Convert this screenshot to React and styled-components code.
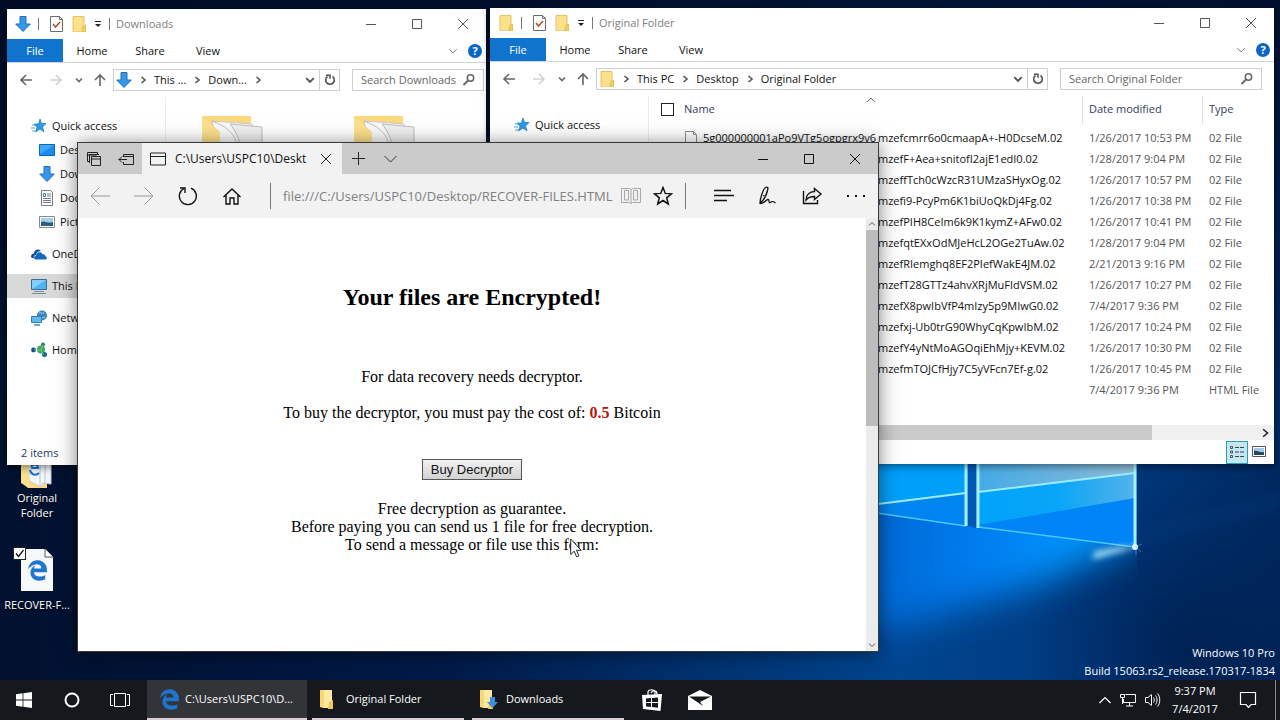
import React from "react";
import styled, { createGlobalStyle } from "styled-components";
import { FaEdgeLegacy } from "react-icons/fa6";

const sidebarItems = [
    { id: 1, title: "Quick access", icon: "star" },
    { id: 2, title: "Desktop", icon: "desktop", nested: true },
    { id: 3, title: "Downloads", icon: "download", nested: true },
    { id: 4, title: "Documents", icon: "document", nested: true },
    { id: 5, title: "Pictures", icon: "picture", nested: true },
    { id: 6, title: "OneDrive", icon: "cloud", spaced: true },
    { id: 7, title: "This PC", icon: "pc", spaced: true },
    { id: 8, title: "Network", icon: "network", spaced: true },
    { id: 9, title: "Homegroup", icon: "home", spaced: true },
];

const prefix = "5g000000001aPo9VTg5ogpgrx9v6";

const files = [
    { name: "mzefcmrr6o0cmaapA+-H0DcseM.02", date: "1/26/2017 10:53 PM" },
    { name: "mzefF+Aea+snitofI2ajE1edI0.02", date: "1/28/2017 9:04 PM" },
    { name: "mzeffTch0cWzcR31UMzaSHyxOg.02", date: "1/26/2017 10:57 PM" },
    { name: "mzefi9-PcyPm6K1biUoQkDj4Fg.02", date: "1/26/2017 10:38 PM" },
    { name: "mzefPIH8CeIm6k9K1kymZ+AFw0.02", date: "1/26/2017 10:41 PM" },
    { name: "mzefqtEXxOdMJeHcL2OGe2TuAw.02", date: "1/28/2017 9:04 PM" },
    { name: "mzefRIemghq8EF2PIefWakE4JM.02", date: "2/21/2013 9:16 PM" },
    { name: "mzefT28GTTz4ahvXRjMuFIdVSM.02", date: "1/26/2017 10:27 PM" },
    { name: "mzefX8pwIbVfP4mIzy5p9MIwG0.02", date: "7/4/2017 9:36 PM" },
    { name: "mzefxj-Ub0trG90WhyCqKpwIbM.02", date: "1/26/2017 10:24 PM" },
    { name: "mzefY4yNtMoAGOqiEhMjy+KEVM.02", date: "1/26/2017 10:30 PM" },
    { name: "mzefmTOJCfHjy7C5yVFcn7Ef-g.02", date: "1/26/2017 10:45 PM" },
];

/* ---------- icons ---------- */

const Svg = ({ w = 16, h = w, box, children, ...rest }) => (
    <svg
        width={w}
        height={h}
        viewBox={box || `0 0 ${w} ${h}`}
        fill="none"
        aria-hidden="true"
        {...rest}
    >
        {children}
    </svg>
);

const FolderIcon = () => (
    <Svg>
        <path d="M2 .5h11V16H2z" fill="#fbe18a" stroke="#e6c562" />
        <path d="M12 10l2.500-1v7H11z" fill="#f4cf63" stroke="#dcb84e" strokeWidth=".8" />
    </Svg>
);

const DownloadIcon = () => (
    <Svg>
        <path d="M5 .5h6V8h4.300L8 15.500.7 8H5z" fill="#3697e6" stroke="#1d6fbd" />
    </Svg>
);

const CheckDocIcon = () => (
    <Svg>
        <path d="M2.500.5h9l3 3v12h-12z" fill="#fff" stroke="#6b6b6b" />
        <path d="M11.500.5v3h3" stroke="#6b6b6b" />
        <path d="M5 8l2.500 3L12 6" stroke="#b5532c" strokeWidth="1.600" />
    </Svg>
);

const FileIcon = () => (
    <Svg>
        <path d="M2.500 1.500h8l3 3v11h-11z" fill="#fff" stroke="#8c8c8c" />
        <path d="M10.500 1.500v3h3" stroke="#8c8c8c" />
    </Svg>
);

const TaskFolderIcon = ({ download }) => (
    <Svg w={20} h={20}>
        <path d="M2 1h8v18H5l-3-1z" fill="#f9d872" />
        <path d="M6 1h8v18H6z" fill="#ffe9a2" />
        <path d="M11 13l4-2v9h-5z" fill="#efc75a" />
        {download && <path d="M12 8h5v5h3l-5.500 6L9 13h3z" fill="#3b8fdd" />}
    </Svg>
);

const Chevron = ({ dir = "right", color = "#555", size = 8, weight = 1.6 }) => {
    const paths = {
        right: "M2.500 1l3.500 3-3.500 3",
        down: "M1 2.500l3 3 3-3",
        up: "M1 5.500l3-3 3 3",
    };
    return (
        <Svg w={size} box="0 0 8 8">
            <path
                d={paths[dir]}
                stroke={color}
                strokeWidth={weight}
                vectorEffect="non-scaling-stroke"
            />
        </Svg>
    );
};

const ArrowIcon = ({ dir = "left", color = "#666" }) => {
    const paths = {
        left: "M13 7H2M7 2L2 7l5 5",
        right: "M1 7h11M7 2l5 5-5 5",
        up: "M7 13V2M2 7l5-5 5 5",
    };
    return (
        <Svg w={14}>
            <path d={paths[dir]} stroke={color} strokeWidth="1.600" />
        </Svg>
    );
};

const RefreshIcon = () => (
    <Svg w={14}>
        <path d="M9.500 3.500A4.300 4.300 0 1 1 4.500 3.500" stroke="#555" strokeWidth="1.600" />
        <path d="M3 2.300h4v3.500" stroke="#555" strokeWidth="1.600" />
    </Svg>
);

const SearchIcon = () => (
    <Svg w={14}>
        <circle cx="8.500" cy="5" r="3.200" stroke="#666" strokeWidth="1.500" />
        <path d="M6 7.500l-4.500 4.500" stroke="#666" strokeWidth="1.800" />
    </Svg>
);

const MinIcon = ({ color }) => (
    <Svg w={10}>
        <path d="M0 5.500h10" stroke={color} />
    </Svg>
);
const MaxIcon = ({ color }) => (
    <Svg w={10}>
        <path d="M.5.500h9v9h-9z" stroke={color} />
    </Svg>
);
const CloseIcon = ({ color }) => (
    <Svg w={10}>
        <path d="M0 0l10 10M10 0L0 10" stroke={color} />
    </Svg>
);

const SideIcon = ({ name }) => {
    switch (name) {
        case "star":
            return (
                <Svg>
                    <path d="M9 1l1.500 4.500H15L11.500 9l1.500 5-4-3-4.500 3L6 9.500 3 6h4.500z" fill="#2f9be3" stroke="#1774b8" strokeWidth=".7" />
                    <path d="M1 7h4M0 10h4M1 13h3" stroke="#4aa8e6" />
                </Svg>
            );
        case "desktop":
            return (
                <Svg>
                    <path d="M.5 2.500h15v11H.5z" fill="#1b8df0" stroke="#0a66b8" />
                    <path d="M1 3h14L1 12z" fill="#41a7fa" />
                </Svg>
            );
        case "download":
            return <DownloadIcon />;
        case "document":
            return (
                <Svg>
                    <path d="M2.500.5h9l2 2v13h-11z" fill="#fff" stroke="#7a7a7a" />
                    <path d="M8 4h4M8 6h4M4 8.500h8M4 10.500h8M4 12.500h8" stroke="#6a7a8a" />
                    <path d="M4.500 3.500h2v3h-2z" stroke="#2d7fb8" />
                </Svg>
            );
        case "picture":
            return (
                <Svg>
                    <path d="M.5 2.500h15v11H.5z" fill="#fff" stroke="#8a8a8a" />
                    <path d="M2 4h12v8H2z" fill="#9ed0ee" />
                    <path d="M2 8c3-2 7 2 12 0v4H2z" fill="#2d5f78" />
                </Svg>
            );
        case "cloud":
            return (
                <Svg>
                    <path d="M0 11c0-3 2-3.500 3-3.500C3 3.500 8 2 10 5c-4 0-5 3-5 4-2 0-2.500 2-2 3H1z" fill="#0d4f9e" />
                    <path d="M5 13.500c-2.500 0-2.500-3.500 0-3.700 0-4 5.500-4.500 6.500-1.500C14 8 14.500 10 14.300 10.300c2 .2 2 3.200 0 3.200z" fill="#1467bd" />
                </Svg>
            );
        case "pc":
            return (
                <Svg>
                    <path d="M.5 1.500h15v10H.5z" fill="#4fb4f2" stroke="#3a6f94" />
                    <path d="M1 2h14L1 11z" fill="#84cdf8" />
                    <path d="M3 13.500h10M1 15.500h14" stroke="#7b8c99" />
                </Svg>
            );
        case "network":
            return (
                <Svg>
                    <circle cx="11" cy="5.500" r="5" fill="#3f86b8" />
                    <path d="M8 3c2-1 3 1 5 0M7 7c3-1 4 2 7 0" stroke="#a8d4ee" />
                    <path d="M.5 6.500h10v6H.5z" fill="#5bbcf3" stroke="#3a7aa5" />
                    <path d="M3 15h6" stroke="#4a86ac" strokeWidth="1.500" />
                </Svg>
            );
        default:
            return (
                <Svg>
                    <circle cx="2.500" cy="8" r="2.400" fill="#11508c" />
                    <circle cx="10" cy="7.500" r="4" fill="#3fa85a" />
                    <circle cx="12" cy="2.500" r="2" fill="#2d7d6c" />
                    <circle cx="13.500" cy="12.500" r="2.500" fill="#14639d" />
                    <path d="M3 8l7 0 3 5M10 8l2-5" stroke="#7fd08f" strokeWidth=".8" />
                </Svg>
            );
    }
};

const BigFolderIcon = () => (
    <Svg w={62} h={60}>
        <path d="M0 0h49v60H0z" fill="#fbd97c" />
        <path d="M10 5l40 3v52H22z" fill="#f9f9f9" stroke="#c9c9c9" />
        <path d="M28 8l32 3v49H42c0-22-4-40-14-52z" fill="#efefef" stroke="#bdbdbd" />
        <path d="M10 5c13 5 20 10 24 20l4 35" stroke="#bdbdbd" />
        <path d="M0 0l18 16v44H0z" fill="#fde08d" />
    </Svg>
);

/* ---------- wallpaper ---------- */

const Wallpaper = () => (
    <WallpaperStyled viewBox="0 0 1280 720" preserveAspectRatio="xMidYMid slice" aria-hidden="true">
        <defs>
            <linearGradient id="base" x1="0" x2="1280" y1="0" y2="0" gradientUnits="userSpaceOnUse">
                <stop offset="0" stopColor="#01112f" />
                <stop offset=".35" stopColor="#001a48" />
                <stop offset=".7" stopColor="#00458f" />
                <stop offset=".86" stopColor="#003a80" />
                <stop offset="1" stopColor="#00285f" />
            </linearGradient>
            <linearGradient id="top" x1="0" x2="0" y1="0" y2="400" gradientUnits="userSpaceOnUse">
                <stop offset="0" stopColor="#000c26" stopOpacity=".85" />
                <stop offset="1" stopColor="#000c26" stopOpacity="0" />
            </linearGradient>
            <radialGradient id="shade" cx="1190" cy="650" r="170" gradientUnits="userSpaceOnUse">
                <stop offset="0" stopColor="#001c4a" stopOpacity=".75" />
                <stop offset="1" stopColor="#001c4a" stopOpacity="0" />
            </radialGradient>
            <radialGradient id="beam" cx="1080" cy="550" r="330" gradientUnits="userSpaceOnUse">
                <stop offset="0" stopColor="#0098ff" />
                <stop offset=".3" stopColor="#007df0" />
                <stop offset=".65" stopColor="#0067d2" />
                <stop offset="1" stopColor="#004a9c" stopOpacity="0" />
            </radialGradient>
            <linearGradient id="pane" x1="978" x2="1135" y1="0" y2="0" gradientUnits="userSpaceOnUse">
                <stop offset="0" stopColor="#45abe6" />
                <stop offset="1" stopColor="#8dbcd8" />
            </linearGradient>
            <linearGradient id="paneMid" x1="978" x2="1135" y1="0" y2="0" gradientUnits="userSpaceOnUse">
                <stop offset="0" stopColor="#00a4fb" />
                <stop offset=".5" stopColor="#08a5f8" />
                <stop offset="1" stopColor="#55b2ea" />
            </linearGradient>
            <filter id="soft" x="-30%" y="-30%" width="160%" height="160%">
                <feGaussianBlur stdDeviation="18" />
            </filter>
            <filter id="glow" x="-50%" y="-50%" width="200%" height="200%">
                <feGaussianBlur stdDeviation="3" />
            </filter>
            <clipPath id="leftOfEdge">
                <path d="M0 0h1137v720H0z" />
            </clipPath>
        </defs>
        <path d="M0 0h1280v720H0z" fill="url(#base)" />
        <path d="M0 0h1280v720H0z" fill="url(#top)" />
        <path d="M0 0h1280v720H0z" fill="url(#shade)" />
        <g clipPath="url(#leftOfEdge)">
            <path d="M1137 400v140L1040 584 900 628 760 650V400z" fill="url(#beam)" filter="url(#soft)" />
        </g>
        <path d="M1137 548l143-38v-20l-143 40z" fill="#0a4a92" opacity=".12" filter="url(#glow)" />
        <path d="M870 440h96v86l-96-15z" fill="#0085f0" />
        <path d="M870 440h96v53l-96 12z" fill="#00a0fa" />
        <path d="M968 440h8v88l-8-2z" fill="#0058b4" />
        <path d="M978 440h157v106l-157-19z" fill="#0084f6" />
        <path d="M978 440h157v58l-157 27z" fill="url(#paneMid)" />
        <path d="M978 440h157v33l-157 19z" fill="url(#pane)" />
        <path d="M870 505l96-12M978 492l157-19" stroke="#9cecff" strokeWidth="2" />
        <path d="M870 512l96 14M978 527l157 20" stroke="#4bc8fa" strokeWidth="1.500" />
        <path d="M966 440v86M978 440v88M1135 440v108" stroke="#a5f1ff" strokeWidth="3" />
        <path d="M1137 547l-45 12 3-7 25-5z" fill="#bdf0ff" filter="url(#glow)" />
        <circle cx="1135" cy="547" r="3" fill="#effcff" />
        <path d="M1129 550l13-6M1136 539v16M1131 542l10 10" stroke="#70d6ff" strokeWidth=".6" opacity=".7" />
    </WallpaperStyled>
);

/* ---------- explorer ---------- */

function Explorer({ title, icon, crumbs, places, pad, sortable, status, children, ...place }) {
    return (
        <WindowStyled {...place}>
            <TitleBar>
                <QuickTools>
                    {icon}
                    <Divider />
                    <CheckDocIcon />
                    <FolderIcon />
                    <Svg w={8} h={8}>
                        <path d="M1 1.500h6" stroke="#222" />
                        <path d="M1 4h6L4 7z" fill="#222" />
                    </Svg>
                    <Divider />
                </QuickTools>
                <WindowTitle>{title}</WindowTitle>
                <WindowControls color="#555" />
            </TitleBar>
            <Ribbon>
                <FileTab type="button">File</FileTab>
                <RibbonTab type="button">Home</RibbonTab>
                <RibbonTab type="button">Share</RibbonTab>
                <RibbonTab type="button">View</RibbonTab>
                <RibbonEnd>
                    <IconButton type="button" aria-label="Expand ribbon">
                        <Chevron dir="down" size={10} weight={1} color="#777" />
                    </IconButton>
                    <HelpButton type="button" aria-label="Help">?</HelpButton>
                </RibbonEnd>
            </Ribbon>
            <AddressRow $pad={pad}>
                <NavButtons>
                    <IconButton type="button" aria-label="Back"><ArrowIcon /></IconButton>
                    <IconButton type="button" aria-label="Forward"><ArrowIcon dir="right" color="#d2d2d2" /></IconButton>
                    <IconButton type="button" aria-label="Recent"><Chevron dir="down" color="#666" /></IconButton>
                    <IconButton type="button" aria-label="Up"><ArrowIcon dir="up" /></IconButton>
                </NavButtons>
                <AddressBox>
                    {icon}
                    {crumbs.map((crumb) => (
                        <Crumb key={crumb}>
                            <Chevron />
                            <span>{crumb}</span>
                        </Crumb>
                    ))}
                    {!sortable && <Crumb><Chevron /></Crumb>}
                    <AddressEnd>
                        <IconButton type="button" aria-label="Previous locations">
                            <Chevron dir="down" size={10} weight={2} />
                        </IconButton>
                        <RefreshButton type="button" aria-label="Refresh"><RefreshIcon /></RefreshButton>
                    </AddressEnd>
                </AddressBox>
                <SearchBox $wide={sortable}>
                    <input type="text" aria-label={`Search ${title}`} placeholder={`Search ${title}`} />
                    <SearchIcon />
                </SearchBox>
            </AddressRow>
            <Body>
                <Sidebar>
                    {places.map((item) => (
                        <SideItem
                            key={item.id}
                            $nested={item.nested}
                            $spaced={item.spaced}
                            $active={item.icon === "pc"}
                        >
                            <SideIcon name={item.icon} />
                            <span>{item.title}</span>
                        </SideItem>
                    ))}
                </Sidebar>
                {children}
            </Body>
            <StatusBar>
                <span>{status}</span>
                {sortable && (
                    <ViewButtons>
                        <ViewButton type="button" aria-label="Details" $active>
                            <Svg>
                                <path d="M1.500 2.500h2v2h-2zM1.500 7h2v2h-2zM1.500 11.500h2v2h-2z" stroke="#444" strokeWidth=".9" />
                                <path d="M6 3.500h4M11 3.500h4M6 8h4M11 8h4M6 12.500h4M11 12.500h4" stroke="#444" />
                            </Svg>
                        </ViewButton>
                        <ViewButton type="button" aria-label="Large icons">
                            <Svg w={14} h={12}>
                                <path d="M.5.500h13v10H.5z" fill="#fff" stroke="#555" />
                                <path d="M2 2h10v7H2z" fill="#9ccbe8" />
                                <path d="M2 5c3-1 6 2 10 1v3H2z" fill="#24465c" />
                            </Svg>
                        </ViewButton>
                    </ViewButtons>
                )}
            </StatusBar>
        </WindowStyled>
    );
}

function WindowControls({ color }) {
    return (
        <Controls>
            <ControlButton type="button" aria-label="Minimize"><MinIcon color={color} /></ControlButton>
            <ControlButton type="button" aria-label="Maximize"><MaxIcon color={color} /></ControlButton>
            <ControlButton type="button" aria-label="Close"><CloseIcon color={color} /></ControlButton>
        </Controls>
    );
}

function FileTable() {
    return (
        <FilePane>
            <TableStyled>
                <colgroup>
                    <col />
                    <col className="date" />
                    <col className="type" />
                </colgroup>
                <thead>
                    <tr>
                        <th>
                            <NameHead>
                                <input type="checkbox" id="all" aria-label="Select all" />
                                <label htmlFor="all">Name</label>
                                <SortMark><Chevron dir="up" size={10} weight={1} /></SortMark>
                            </NameHead>
                        </th>
                        <th>Date modified</th>
                        <th>Type</th>
                    </tr>
                </thead>
                <tbody>
                    {files.map((file) => (
                        <tr key={file.name}>
                            <td>
                                <FileName>
                                    <FileIcon />
                                    <Prefix>{prefix}</Prefix>
                                    <span>{file.name}</span>
                                </FileName>
                            </td>
                            <td>{file.date}</td>
                            <td>02 File</td>
                        </tr>
                    ))}
                    <tr>
                        <td>
                            <FileName>
                                <FileIcon />
                                <span>RECOVER-FILES.HTML</span>
                            </FileName>
                        </td>
                        <td>7/4/2017 9:36 PM</td>
                        <td>HTML File</td>
                    </tr>
                </tbody>
            </TableStyled>
            <HScroll>
                <HThumb />
                <Chevron color="#222" size={10} />
            </HScroll>
        </FilePane>
    );
}

/* ---------- browser ---------- */

function Browser() {
    return (
        <BrowserStyled>
            <TabStrip>
                <StripButtons>
                    <Svg w={16}>
                        <path d="M3.500 10.500h-2v-9h10v2M1.500 4h9" stroke="#222" />
                        <path d="M5.500 5.500h9v9h-9zM5.500 8h9M3.500 12V3.500H13" stroke="#222" />
                    </Svg>
                    <Svg w={16}>
                        <path d="M5.500 6V3.500h10v10h-10V11M6 5.500h9M9 8.500H.7M4 5.500l-3 3 3 3" stroke="#222" />
                    </Svg>
                </StripButtons>
                <Tab>
                    <Svg w={16}>
                        <path d="M.5 2h15v12H.5zM.5 5.500h15" stroke="#222" />
                    </Svg>
                    <TabLabel>C:\Users\USPC10\Deskt</TabLabel>
                    <IconButton type="button" aria-label="Close tab"><CloseIcon color="#222" /></IconButton>
                </Tab>
                <StripButton type="button" aria-label="New tab">
                    <Svg w={13}><path d="M6.500 0v13M0 6.500h13" stroke="#222" /></Svg>
                </StripButton>
                <StripButton type="button" aria-label="Tab previews">
                    <Svg w={13}><path d="M.5 4l6 6 6-6" stroke="#333" /></Svg>
                </StripButton>
                <WindowControls color="#111" />
            </TabStrip>
            <Toolbar>
                <ToolButton type="button" aria-label="Back">
                    <Svg w={20}><path d="M20 10H1M9.500 1.500L1 10l8.500 8.500" stroke="#999" /></Svg>
                </ToolButton>
                <ToolButton type="button" aria-label="Forward">
                    <Svg w={20}><path d="M0 10h19M10.500 1.500L19 10l-8.500 8.500" stroke="#999" /></Svg>
                </ToolButton>
                <ToolButton type="button" aria-label="Refresh">
                    <Svg w={20}>
                        <path d="M13 2.200A8.500 8.500 0 1 1 6 2.500" stroke="#111" strokeWidth="1.400" />
                        <path d="M2 2h5v5" stroke="#111" strokeWidth="1.400" />
                    </Svg>
                </ToolButton>
                <ToolButton type="button" aria-label="Home">
                    <Svg w={20}>
                        <path d="M1.500 11L10 3l8.500 8M4 9v9h4v-6h4v6h4V9" stroke="#111" strokeWidth="1.400" />
                    </Svg>
                </ToolButton>
                <UrlField>
                    <input type="text" aria-label="Address" defaultValue="file:///C:/Users/USPC10/Desktop/RECOVER-FILES.HTML" />
                    <Svg w={20}>
                        <path d="M.5 2.500h8l1.500 1 1.500-1h8v14h-8l-1.500 1-1.500-1h-8zM10 3.500v14M3.500 4.500h4v9.500h-4zM12.500 4.500h4v9.500h-4z" stroke="#a8a8a8" />
                    </Svg>
                    <Svg w={20}>
                        <path d="M10 1.500l2.300 5.900 6.200.4-4.800 4 1.600 6.200-5.300-3.500L4.700 18l1.600-6.200-4.800-4 6.200-.4z" stroke="#111" strokeWidth="1.500" />
                    </Svg>
                </UrlField>
                <ToolButton type="button" aria-label="Hub">
                    <Svg w={20}><path d="M0 4.500h17M0 9.500h20M0 14.500h13" stroke="#111" strokeWidth="1.300" /></Svg>
                </ToolButton>
                <ToolButton type="button" aria-label="Make a web note">
                    <Svg w={20}>
                        <path d="M2 17c0-4 3-14 5.500-15.500 2-1 3 0 2 3C8.500 9 6 14 2 17zM5 9.500l3 1M2 17.500c5 0 6-4 8-4s0 4 2.500 3c2-2 3-1 5 .5" stroke="#111" strokeWidth="1.300" />
                    </Svg>
                </ToolButton>
                <ToolButton type="button" aria-label="Share">
                    <Svg w={20}>
                        <path d="M1.500 5v12.500h14V14" stroke="#111" strokeWidth="1.400" />
                        <path d="M12.500 2.500L19 8l-6.500 5.500v-3c-4 0-6 .5-8.500 3.500 0-5 3.500-8.500 8.500-8.500z" stroke="#111" strokeWidth="1.400" />
                    </Svg>
                </ToolButton>
                <ToolButton type="button" aria-label="More">
                    <Svg w={20}>
                        <path d="M1 9h2v2H1zM9 9h2v2H9zM17 9h2v2h-2z" fill="#111" />
                    </Svg>
                </ToolButton>
            </Toolbar>
            <Viewport>
                <Page>
                    <h2>Your files are Encrypted!</h2>
                    <p>For data recovery needs decryptor.</p>
                    <p>
                        To buy the decryptor, you must pay the cost of: <b>0.5</b> Bitcoin
                    </p>
                    <BuyButton type="button">Buy Decryptor</BuyButton>
                    <p>
                        Free decryption as guarantee.
                        <br />
                        Before paying you can send us 1 file for free decryption.
                        <br />
                        To send a message or file use this form:
                    </p>
                </Page>
                <VScroll>
                    <Chevron dir="up" weight={1} />
                    <VThumb />
                    <Chevron dir="down" weight={1} />
                </VScroll>
            </Viewport>
        </BrowserStyled>
    );
}

function Taskbar() {
    return (
        <TaskbarStyled>
            <TaskButton type="button" aria-label="Start">
                <Svg w={16}>
                    <path d="M0 2.200L6.600 1.300v6.300H0zM7.400 1.200L16 0v7.600H7.400zM0 8.400h6.600v6.300L0 13.800zM7.400 8.400H16V16l-8.600-1.200z" fill="#fff" />
                </Svg>
            </TaskButton>
            <TaskButton type="button" aria-label="Cortana">
                <Svg w={16}><circle cx="8" cy="8" r="6.500" stroke="#fff" strokeWidth="2" /></Svg>
            </TaskButton>
            <TaskButton type="button" aria-label="Task view">
                <Svg w={20} h={14}>
                    <path d="M4.500.5h11v13h-11zM3 1.500H.5v11H3M17 1.500h2.500v11H17" stroke="#fff" />
                </Svg>
            </TaskButton>
            <Apps>
                <TaskItem type="button" $active>
                    <FaEdgeLegacy size={21} color="#1f74d0" />
                    C:\Users\USPC10\D...
                </TaskItem>
                <TaskItem type="button"><TaskFolderIcon />Original Folder</TaskItem>
                <TaskItem type="button"><TaskFolderIcon download />Downloads</TaskItem>
            </Apps>
            <TaskButton type="button" aria-label="Store">
                <Svg w={22} h={24}>
                    <path d="M7 8V4c0-3 7-3 7 0v3M10 5c1-3 6-3 6 1v2" stroke="#fff" strokeWidth="1.200" />
                    <path d="M1 7l20-1-1.500 17L2 21z" fill="#fff" />
                    <path d="M5 10.500l5-.5v4H5zM11 10l6-.5V14h-6zM5 15h5v4l-5-.5zM11 15h6v4.700l-6-.6z" fill="#15191e" />
                </Svg>
            </TaskButton>
            <TaskButton type="button" aria-label="Mail">
                <Svg w={24} h={20}>
                    <path d="M0 6l12-6 12 6v14H0z" fill="#fff" />
                    <path d="M1 6.500h22L12 12l3 4z" fill="#15191e" />
                </Svg>
            </TaskButton>
            <Tray>
                <Svg w={12}><path d="M.5 9L6 3.500 11.500 9" stroke="#fff" strokeWidth="1.200" /></Svg>
                <Svg w={16}>
                    <path d="M5.500 2.500h10v8h-12V7M9.500 11v3M6 14h7" stroke="#fff" />
                    <path d="M.5 2.500h4v3h-4zM2.500 6v6" stroke="#fff" />
                </Svg>
                <Svg w={16} h={16}>
                    <path d="M.5 5.500h2.500L6.500 2.500v11L3 10.500H.5z" stroke="#fff" />
                    <path d="M8.500 5.500c1 1.500 1 3.500 0 5M10.500 3.500c2 2.500 2 6.500 0 9M12.500 1.500c3 3.500 3 9.500 0 13" stroke="#fff" />
                </Svg>
                <Clock>
                    <span>9:37 PM</span>
                    <span>7/4/2017</span>
                </Clock>
                <Svg w={18} h={16}>
                    <path d="M1.500.5h15v12H12l-2.500 3-2.500-3H1.500z" stroke="#fff" strokeWidth="1.200" />
                </Svg>
                <ShowDesktop />
            </Tray>
        </TaskbarStyled>
    );
}

function App() {
    return (
        <DesktopStyled>
            <GlobalStyle />
            <Workspace>
                <Wallpaper />
                <DesktopIcons>
                    <DesktopIcon>
                        <Svg w={34} h={42}>
                            <path d="M1 0h26v42H8L1 36z" fill="#fbd97c" />
                            <path d="M9 4h22v34l-8-1-2 4-12-6z" fill="#f3f6fb" stroke="#c2cbd8" />
                            <path d="M20 10v30M25 12v25" stroke="#b8c4d4" />
                            <path d="M10 24c1 5 6 6 9 3M11 22h7c0-4-5-5-7-1" stroke="#1f74d0" strokeWidth="2" />
                            <path d="M1 0l8 8v34l-8-5z" fill="#fde08d" />
                        </Svg>
                        <span>Original Folder</span>
                    </DesktopIcon>
                    <DesktopIcon>
                        <FileSheet>
                            <Svg w={32} h={42}>
                                <path d="M0 0h24l8 8v34H0z" fill="#f7f8fa" />
                                <path d="M24 0v8h8" stroke="#555" fill="#fff" />
                            </Svg>
                            <FaEdgeLegacy size={21} color="#1f74d0" />
                            <input type="checkbox" aria-label="Select RECOVER-FILES" defaultChecked />
                            <Svg w={9} className="tick"><path d="M1 4.500l2.500 3L8.500 1" stroke="#111" strokeWidth="1.300" /></Svg>
                        </FileSheet>
                        <span>RECOVER-F...</span>
                    </DesktopIcon>
                </DesktopIcons>
                <Watermark>
                    <span>Windows 10 Pro</span>
                    <span>Build 15063.rs2_release.170317-1834</span>
                </Watermark>
                <Explorer
                    title="Downloads"
                    icon={<DownloadIcon />}
                    crumbs={["This ...", "Down..."]}
                    places={sidebarItems}
                    pad={2}
                    status="2 items"
                    $left={7}
                    $top={9}
                    $width={479}
                    $height={456}
                >
                    <FolderGrid>
                        <BigFolderIcon />
                        <BigFolderIcon />
                    </FolderGrid>
                </Explorer>
                <Explorer
                    title="Original Folder"
                    icon={<FolderIcon />}
                    crumbs={["This PC", "Desktop", "Original Folder"]}
                    places={sidebarItems.slice(0, 1)}
                    pad={12}
                    sortable
                    status="13 items"
                    $left={490}
                    $top={8}
                    $width={784}
                    $height={456}
                >
                    <FileTable />
                </Explorer>
                <Browser />
                <Cursor viewBox="0 0 12 20" width="12" height="20" aria-hidden="true">
                    <path d="M.7 1v15.500l3.500-3.300 2.400 5.600 2.300-1-2.400-5.500h4.700z" fill="#fff" stroke="#111" strokeWidth=".9" />
                </Cursor>
            </Workspace>
            <Taskbar />
        </DesktopStyled>
    );
}

const GlobalStyle = createGlobalStyle`
    * {
        box-sizing: border-box;
    }
    body {
        margin: 0;
        font-family: "Open Sans", "Noto Sans", sans-serif;
        font-size: 11px;
        line-height: 16px;
        color: #111;
    }
    button, input {
        font: inherit;
        color: inherit;
        border: none;
        background: none;
        padding: 0;
        margin: 0;
        min-width: 0;
    }
    svg {
        flex: none;
        display: block;
    }
`;

const DesktopStyled = styled.main`
    display: flex;
    flex-direction: column;
    height: 100vh;
    overflow: hidden;
    background: #01112f;
`;

const Workspace = styled.div`
    flex: 1;
    position: relative;
    min-height: 0;
`;

const WallpaperStyled = styled.svg`
    position: absolute;
    left: 0;
    top: 0;
    width: 100%;
    height: 100vh;
`;

const DesktopIcons = styled.div`
    position: absolute;
    left: 0;
    top: 446px;
    width: 74px;
    display: flex;
    flex-direction: column;
    gap: 29px;
`;

const DesktopIcon = styled.div`
    display: flex;
    flex-direction: column;
    align-items: center;
    gap: 6px;
    color: #fff;
    text-align: center;
    line-height: 15px;
    text-shadow: 0 1px 2px #000;
    white-space: nowrap;
    span {
        white-space: pre-wrap;
        width: 72px;
        padding: 0 1px;
    }
    &:first-child {
        gap: 2px;
        span {
            padding: 0 14px;
        }
    }
`;

const FileSheet = styled.div`
    position: relative;
    display: grid;
    place-items: center;
    & > svg {
        grid-area: 1 / 1;
    }
    input {
        appearance: none;
        position: absolute;
        left: -8px;
        top: -2px;
        width: 13px;
        height: 13px;
        background: #fff;
        border: 1px solid #222;
    }
    .tick {
        position: absolute;
        left: -6px;
        top: 0;
    }
`;

const Watermark = styled.div`
    position: absolute;
    right: 5px;
    bottom: 0;
    display: flex;
    flex-direction: column;
    text-align: right;
    color: #fff;
    line-height: 18px;
`;

const WindowStyled = styled.section`
    position: absolute;
    left: ${(p) => p.$left}px;
    top: ${(p) => p.$top}px;
    width: ${(p) => p.$width}px;
    height: ${(p) => p.$height}px;
    display: flex;
    flex-direction: column;
    background: #fff;
    box-shadow: 0 2px 8px rgba(0, 0, 0, 0.5);
    overflow: hidden;
`;

const TitleBar = styled.header`
    display: flex;
    align-items: center;
    height: 30px;
    flex: none;
    padding-left: 8px;
`;

const QuickTools = styled.div`
    display: flex;
    align-items: center;
    gap: 7px;
`;

const Divider = styled.i`
    width: 1px;
    height: 12px;
    margin: 0 2px 0 0;
    background: #777;
`;

const WindowTitle = styled.h1`
    flex: 1;
    margin: 0 0 0 4px;
    font-size: 11px;
    font-weight: 400;
    color: #808080;
`;

const Controls = styled.div`
    display: flex;
    align-self: stretch;
    margin-left: auto;
`;

const ControlButton = styled.button`
    width: 46px;
    display: grid;
    place-items: center;
`;

const Ribbon = styled.nav`
    display: flex;
    height: 24px;
    flex: none;
    border-bottom: 1px solid #d4d4d4;
`;

const RibbonTab = styled.button`
    width: 58px;
    text-align: center;
`;

const FileTab = styled(RibbonTab)`
    width: 56px;
    background: #1074cf;
    color: #fff;
`;

const RibbonEnd = styled.div`
    display: flex;
    align-items: center;
    gap: 10px;
    margin-left: auto;
    padding-right: 4px;
`;

const IconButton = styled.button`
    display: grid;
    place-items: center;
`;

const HelpButton = styled.button`
    width: 14px;
    height: 14px;
    border-radius: 50%;
    background: #0b66c3;
    color: #fff;
    font-size: 11px;
    font-weight: 700;
    line-height: 14px;
`;

const AddressRow = styled.div`
    display: flex;
    flex: none;
    gap: 12px;
    padding: 6px ${(p) => p.$pad}px 0 2px;
`;

const NavButtons = styled.div`
    display: grid;
    grid-template-columns: 34px 26px 20px 22px;
    align-items: center;
    margin-right: -10px;
`;

const AddressBox = styled.div`
    flex: 1;
    display: flex;
    align-items: center;
    height: 22px;
    padding-left: 2px;
    border: 1px solid #cfcfcf;
    white-space: nowrap;
`;

const Crumb = styled.span`
    display: flex;
    align-items: center;
    gap: 7px;
    padding-left: 7px;
`;

const AddressEnd = styled.div`
    display: flex;
    align-self: stretch;
    margin-left: auto;
    gap: 4px;
`;

const RefreshButton = styled(IconButton)`
    width: 20px;
    border-left: 1px solid #cfcfcf;
`;

const SearchBox = styled.label`
    display: flex;
    align-items: center;
    width: ${(p) => (p.$wide ? 202 : 132)}px;
    padding: 0 7px 0 8px;
    border: 1px solid #cfcfcf;
    input {
        flex: 1;
        outline: none;
    }
    input::placeholder {
        color: #666;
        opacity: 1;
    }
`;

const Body = styled.div`
    flex: 1;
    display: flex;
    min-height: 0;
    padding-top: 6px;
`;

const Sidebar = styled.ul`
    width: 159px;
    flex: none;
    margin: 0;
    padding: 17px 0 0;
    list-style: none;
    border-right: 1px solid #ececec;
`;

const SideItem = styled.li`
    display: flex;
    align-items: center;
    gap: 5px;
    height: 24px;
    margin-top: ${(p) => (p.$spaced ? 8 : 0)}px;
    padding-left: ${(p) => (p.$nested ? 32 : 24)}px;
    background: ${(p) => (p.$active ? "#d9d9d9" : "transparent")};
`;

const FolderGrid = styled.div`
    display: flex;
    align-items: flex-start;
    gap: 90px;
    padding: 19px 0 0 36px;
`;

const StatusBar = styled.footer`
    display: flex;
    align-items: center;
    justify-content: space-between;
    height: 24px;
    flex: none;
    padding: 0 4px 0 14px;
    color: #24365c;
`;

const ViewButtons = styled.div`
    display: flex;
`;

const ViewButton = styled.button`
    width: 22px;
    height: 23px;
    display: grid;
    place-items: center;
    border: 1px solid ${(p) => (p.$active ? "#2a9fb8" : "transparent")};
    background: ${(p) => (p.$active ? "#c4e8f2" : "transparent")};
`;

const FilePane = styled.div`
    flex: 1;
    display: flex;
    flex-direction: column;
    min-width: 0;
`;

const TableStyled = styled.table`
    width: 100%;
    table-layout: fixed;
    border-collapse: separate;
    border-spacing: 0;
    .date {
        width: 120px;
    }
    .type {
        width: 72px;
    }
    th {
        height: 31px;
        padding: 0 0 0 6px;
        text-align: left;
        font-weight: 400;
        color: #33415c;
        border-left: 1px solid #dedede;
        border-bottom: 5px solid #fff;
    }
    th:first-child {
        border-left: none;
        padding-left: 12px;
    }
    td {
        height: 21px;
        padding: 0 0 0 7px;
        white-space: nowrap;
        color: #555;
    }
    td:first-child {
        padding-left: 34px;
        color: #111;
    }
`;

const NameHead = styled.div`
    display: flex;
    align-items: center;
    gap: 10px;
    position: relative;
    input {
        appearance: none;
        width: 13px;
        height: 13px;
        border: 1px solid #222;
    }
`;

const SortMark = styled.span`
    position: absolute;
    left: 205px;
    top: -6px;
`;

const FileName = styled.div`
    display: flex;
    align-items: center;
    gap: 4px;
`;

const Prefix = styled.span`
    width: 171px;
`;

const HScroll = styled.div`
    display: flex;
    align-items: center;
    justify-content: space-between;
    height: 15px;
    margin-top: auto;
    padding-right: 4px;
    background: #f0f0f0;
`;

const HThumb = styled.div`
    width: 81%;
    height: 100%;
    background: #cbcbcb;
`;

const BrowserStyled = styled.section`
    position: absolute;
    left: 77px;
    top: 142px;
    width: 802px;
    height: 510px;
    display: flex;
    flex-direction: column;
    border: 1px solid #3a3a3a;
    background: #fff;
    box-shadow: 0 2px 18px rgba(0, 0, 0, 0.5);
`;

const TabStrip = styled.header`
    display: flex;
    height: 31px;
    flex: none;
    background: #cbcbcb;
`;

const StripButtons = styled.div`
    display: flex;
    align-items: center;
    gap: 16px;
    width: 64px;
    padding-left: 8px;
`;

const Tab = styled.div`
    display: flex;
    align-items: center;
    width: 200px;
    padding: 0 11px 0 8px;
    background: #f2f2f2;
`;

const TabLabel = styled.span`
    flex: 1;
    padding-left: 9px;
    font-size: 12px;
    white-space: nowrap;
    overflow: hidden;
`;

const StripButton = styled.button`
    width: 32px;
    display: grid;
    place-items: center;
`;

const Toolbar = styled.div`
    display: flex;
    align-items: center;
    height: 44px;
    flex: none;
    background: #f2f2f2;
`;

const ToolButton = styled.button`
    width: 44px;
    height: 44px;
    display: grid;
    place-items: center;
`;

const UrlField = styled.div`
    flex: 1;
    display: flex;
    align-items: center;
    gap: 12px;
    height: 26px;
    margin: 0 16px;
    padding: 0 12px;
    border-left: 1px solid #777;
    border-right: 1px solid #777;
    input {
        flex: 1;
        margin-right: -8px;
        color: #808080;
        font-size: 13px;
        line-height: 18px;
        outline: none;
    }
`;

const Viewport = styled.div`
    flex: 1;
    display: flex;
    min-height: 0;
`;

const Page = styled.article`
    flex: 1;
    display: flex;
    flex-direction: column;
    align-items: center;
    padding-top: 65px;
    font-family: "Liberation Serif", serif;
    font-size: 16px;
    line-height: 18px;
    color: #000;
    text-align: center;
    h2 {
        margin: 0 0 57px;
        font-size: 24px;
        line-height: 28px;
    }
    p {
        margin: 0 0 18px;
    }
    b {
        color: #b3150c;
    }
`;

const BuyButton = styled.button`
    width: 100px;
    height: 21px;
    margin: 19px 0 20px;
    border: 1px solid #555;
    background: linear-gradient(#f2f2f2, #d2d2d2);
    font-family: "Liberation Sans", sans-serif;
    font-size: 13px;
    line-height: 18px;
    color: #111;
`;

const VScroll = styled.div`
    width: 12px;
    display: flex;
    flex-direction: column;
    align-items: center;
    background: #ebebeb;
    padding: 2px 0;
    gap: 2px;
    svg:last-child {
        margin-top: auto;
    }
`;

const VThumb = styled.div`
    width: 100%;
    height: 196px;
    background: #bcbcbc;
`;

const Cursor = styled.svg`
    position: absolute;
    left: 570px;
    top: 538px;
`;

const TaskbarStyled = styled.footer`
    position: relative;
    display: flex;
    height: 40px;
    flex: none;
    background: #15191e;
    color: #fff;
`;

const TaskButton = styled.button`
    width: 48px;
    display: grid;
    place-items: center;
`;

const Apps = styled.div`
    display: flex;
    margin: 0 -4px 0 3px;
`;

const TaskItem = styled.button`
    display: flex;
    align-items: center;
    gap: ${(p) => (p.$active ? 5 : 8)}px;
    width: ${(p) => (p.$active ? 160 : 152)}px;
    margin-right: ${(p) => (p.$active ? 5 : 8)}px;
    padding-left: ${(p) => (p.$active ? 12 : 6)}px;
    background: ${(p) => (p.$active ? "#333437" : "transparent")};
    border-bottom: 2px solid #d9cdd2;
    white-space: nowrap;
`;

const Tray = styled.div`
    display: flex;
    align-items: center;
    gap: 9px;
    margin-left: auto;
    padding-right: 4px;
`;

const Clock = styled.div`
    display: flex;
    flex-direction: column;
    align-items: center;
    width: 50px;
    margin-right: 10px;
    line-height: 18px;
`;

const ShowDesktop = styled.i`
    width: 1px;
    height: 40px;
    margin-left: 9px;
    background: #8a8a8a;
`;

export default App;
